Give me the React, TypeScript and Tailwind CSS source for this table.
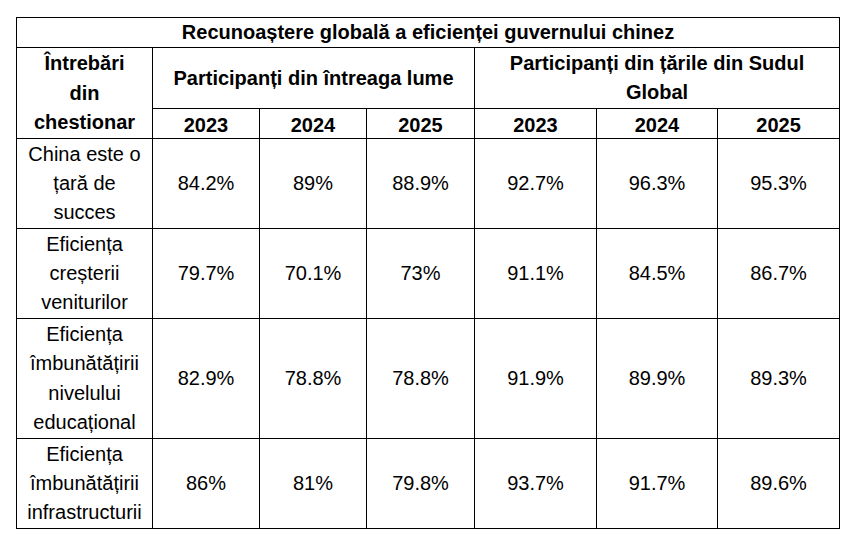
import React from "react";

const rows: { label: string[]; vals: string[]; h: string; lh: string }[] = [
  { label: ["China este o", "țară de", "succes"], vals: ["84.2%", "89%", "88.9%", "92.7%", "96.3%", "95.3%"], h: "h-[90px]", lh: "leading-[29px]" },
  { label: ["Eficiența", "creșterii", "veniturilor"], vals: ["79.7%", "70.1%", "73%", "91.1%", "84.5%", "86.7%"], h: "h-[90px]", lh: "leading-[29px]" },
  { label: ["Eficiența", "îmbunătățirii", "nivelului", "educațional"], vals: ["82.9%", "78.8%", "78.8%", "91.9%", "89.9%", "89.3%"], h: "h-[120px]", lh: "leading-[29.5px]" },
  { label: ["Eficiența", "îmbunătățirii", "infrastructurii"], vals: ["86%", "81%", "79.8%", "93.7%", "91.7%", "89.6%"], h: "h-[90px]", lh: "leading-[29px]" },
];

const cell = "border border-black text-center align-middle p-0";

export default function App() {
  return (
    <div className="w-[856px] h-[546px] bg-white pt-[17px] pl-[16px] text-black" style={{ fontFamily: '"Liberation Sans", Arial, sans-serif' }}>
      <table className="table-fixed border-collapse w-[823px] text-[20px] leading-[29px]">
        <colgroup>
          <col className="w-[136px]" />
          <col className="w-[107px]" />
          <col className="w-[107px]" />
          <col className="w-[108px]" />
          <col className="w-[122px]" />
          <col className="w-[121px]" />
          <col className="w-[122px]" />
        </colgroup>
        <tbody>
          <tr className="h-[30px]">
            <td colSpan={7} className={`${cell} font-bold`}>Recunoaștere globală a eficienței guvernului chinez</td>
          </tr>
          <tr className="h-[61px]">
            <td rowSpan={2} className={`${cell} font-bold leading-[29.5px] pt-[1px]`}>
              Întrebări
              <br />
              din
              <br />
              chestionar
            </td>
            <td colSpan={3} className={`${cell} font-bold`}>Participanți din întreaga lume</td>
            <td colSpan={3} className={`${cell} font-bold leading-[29.5px]`}>
              Participanți din țările din Sudul
              <br />
              Global
            </td>
          </tr>
          <tr className="h-[30px]">
            {["2023", "2024", "2025", "2023", "2024", "2025"].map((y, i) => (
              <td key={i} className={`${cell} font-bold leading-[26px] pt-[2px]`}>{y}</td>
            ))}
          </tr>
          {rows.map((r, i) => (
            <tr key={i} className={r.h}>
              <td className={`${cell} ${r.lh}`}>
                {r.label.map((l, j) => (
                  <div key={j}>{l}</div>
                ))}
              </td>
              {r.vals.map((v, j) => (
                <td key={j} className={cell}>{v}</td>
              ))}
            </tr>
          ))}
        </tbody>
      </table>
    </div>
  );
}
